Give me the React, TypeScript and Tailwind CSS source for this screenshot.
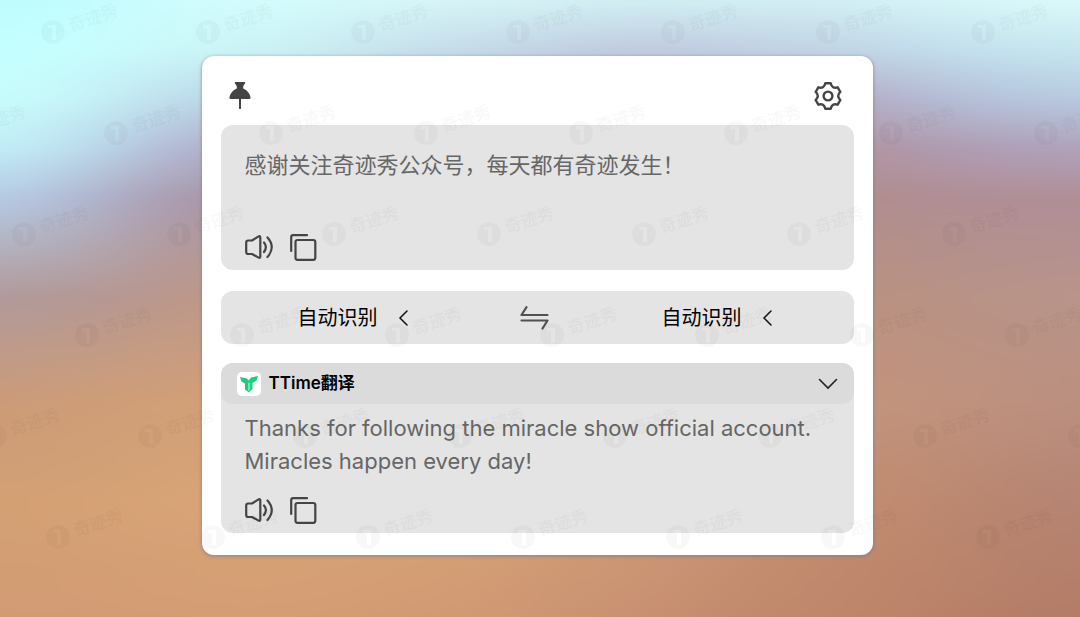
import React, { useState } from 'react';

interface ColorColumn {
  x: number;
  colors: string[];
}

// heights of the colour stops below, in percent of the wallpaper
const stops = [0, 8, 16, 24, 32, 48, 65, 81, 100];

const wallpaper: ColorColumn[] = [
  { x: -90, colors: ['#bcfcff', '#c4ffff', '#c8fdfc', '#c2eef7', '#b6cde6', '#b09a9c', '#cb9b78', '#d3a074', '#d39b74'] },
  { x: 90, colors: ['#cbfdfe', '#cbfcfc', '#c4e8f3', '#b6c8e2', '#aaa0ba', '#b8968e', '#d09f78', '#d6a376', '#d49c74'] },
  { x: 180, colors: ['#d4fcfd', '#cbf2f5', '#b9cfe4', '#aea5c2', '#a8929f', '#c09886', '#d3a077', '#d8a478', '#d59d73'] },
  { x: 360, colors: ['#d6f5f7', '#c6dcea', '#b4b2cc', '#ab98aa', '#b0938f', '#c49a80', '#d3a077', '#d7a377', '#d29a73'] },
  { x: 540, colors: ['#d2eef3', '#bfcbdf', '#b4a6bf', '#b09298', '#b0908c', '#c0947e', '#cd9b78', '#cf9a76', '#c99172'] },
  { x: 720, colors: ['#d2eff4', '#c2d3e4', '#b4a9c2', '#b0929d', '#b08e8c', '#bb9180', '#c3937b', '#c38d70', '#bf876b'] },
  { x: 900, colors: ['#d5f5f8', '#c2e0ee', '#b3c0d9', '#af9cb4', '#b08e96', '#b79285', '#c0937f', '#bc8870', '#b98067'] },
  { x: 1000, colors: ['#dbfafa', '#c6e6f0', '#b8cae0', '#b0a2bc', '#b08e96', '#b8948a', '#bb8f7f', '#b58473', '#b37c67'] },
];

const watermarkRows = [0, 1, 2, 3, 4, 5];
const watermarkCols = [0, 1, 2, 3, 4, 5, 6, 7];

const Wallpaper: React.FC = () => (
  <svg
    className="absolute inset-0 size-full"
    viewBox="0 0 1080 617"
    preserveAspectRatio="none"
    aria-hidden="true"
  >
    <defs>
      <filter id="soften" filterUnits="userSpaceOnUse" x="-300" y="-100" width="1680" height="817" colorInterpolationFilters="sRGB">
        <feGaussianBlur stdDeviation="65 4" />
      </filter>
      {wallpaper.map((column, i) => (
        <linearGradient key={column.x} id={`column-${i}`} x1="0" y1="0" x2="0" y2="617" gradientUnits="userSpaceOnUse">
          {column.colors.map((color, j) => (
            <stop key={j} offset={`${stops[j]}%`} stopColor={color} />
          ))}
        </linearGradient>
      ))}
    </defs>
    <g filter="url(#soften)">
      {wallpaper.map((column, i) => (
        <rect
          key={column.x}
          x={i === 0 ? -300 : column.x}
          y="-30"
          width={1500 - column.x}
          height="680"
          fill={`url(#column-${i})`}
        />
      ))}
    </g>
  </svg>
);

const Watermark: React.FC = () => (
  <svg
    className="pointer-events-none absolute inset-0 size-full"
    viewBox="0 0 1080 617"
    preserveAspectRatio="xMinYMin slice"
    aria-hidden="true"
  >
    {watermarkRows.map((row) =>
      watermarkCols.map((col) => {
        const x = 53 + ((row * 63) % 155) + (col - 1) * 155;
        const y = 32 + row * 101;
        // skip the marks that fall outside the window
        if (x < -60 || x > 1085) return null;
        return (
          <g key={`${row}-${col}`} transform={`translate(${x} ${y})`} fill="#000" opacity="0.022">
            <path
              fillRule="evenodd"
              d="M0-12a12 12 0 1 1 0 24a12 12 0 1 1 0-24ZM-5-4V-7H3V8H-1V-4Z"
            />
            <text
              x="17"
              y="5"
              transform="rotate(-18)"
              className="font-['Noto_Sans_CJK_SC',sans-serif] text-[17px] font-bold"
            >
              奇迹秀
            </text>
          </g>
        );
      })
    )}
  </svg>
);

const PinIcon: React.FC = () => (
  <svg width="22" height="28" viewBox="0 0 22 28" fill="#444" aria-hidden="true">
    <path d="M6.5 0h9c.6 0 .9.7.6 1.200L14.200 4.200v2.300C18 8.200 21.200 11.500 21.500 16c0 .7-.4 1-1 1h-19c-.6 0-1-.3-1-1C.8 11.500 4 8.200 7.800 6.500V4.200L5.900 1.200C5.600.7 5.900 0 6.500 0Z" />
    <path d="M10 16h2v10.500c0 .7-2 .7-2 0Z" />
  </svg>
);

const GearIcon: React.FC = () => (
  <svg width="30" height="30" viewBox="-15 -15 30 30" fill="none" stroke="#444" strokeWidth="2.400" strokeLinejoin="round" aria-hidden="true">
    <path d="M12.360 4.020L9.660 8.690Q4 6.930 2.700 12.710H-2.700Q-4 6.930-9.660 8.690L-12.360 4.020Q-8 0-12.360-4.020L-9.660-8.690Q-4-6.930-2.700-12.710H2.700Q4-6.930 9.660-8.690L12.360-4.020Q8 0 12.360 4.020Z" />
    <circle r="4.400" />
  </svg>
);

const VolumeIcon: React.FC = () => (
  <svg width="29" height="27" viewBox="0 0 29 27" fill="none" stroke="#444" strokeWidth="2.200" strokeLinecap="round" strokeLinejoin="round" aria-hidden="true">
    <path d="M3.200 6.500H7L13.200 2.600Q15.300 1.400 15.300 3.500V22.500Q15.300 24.600 13.200 23.400L7 20H3.200Q1.200 20 1.200 18V8.500Q1.200 6.500 3.200 6.500Z" />
    <path d="M19 8.500Q22.800 13 19 18" />
    <path d="M22.500 3.500Q31 13 22.500 23" />
  </svg>
);

const CopyIcon: React.FC = () => (
  <svg width="27" height="27" viewBox="0 0 27 27" fill="none" stroke="#444" strokeWidth="2.200" strokeLinecap="round" strokeLinejoin="round" aria-hidden="true">
    <rect x="5.500" y="6" width="19.800" height="19.800" rx="2" />
    <path d="M1.200 17V3.200Q1.200 1.200 3.200 1.200H17" />
  </svg>
);

const SwapIcon: React.FC = () => (
  <svg width="29" height="24" viewBox="0 0 29 24" fill="none" stroke="#505050" strokeWidth="2.200" strokeLinecap="round" strokeLinejoin="round" aria-hidden="true">
    <path d="M6.500 1.200L1.500 9H27.500" />
    <path d="M1.500 14.500H27.500L22.500 22.500" />
  </svg>
);

const LogoIcon: React.FC = () => (
  <svg width="24" height="24" viewBox="0 0 24 24" aria-hidden="true">
    <rect width="24" height="24" rx="5" fill="#fff" />
    <path d="M3 5L10 6.500L12 9V20.500L8 17.500V11.500L4.500 9.500Z" fill="#25c77a" />
    <path d="M21 4L14 5.500L11.500 8.500V20.500L15.500 17V11L19.500 8.500Z" fill="#17d577" />
    <path d="M11.500 11L12.500 10.500V18L11.500 19Z" fill="#d8f8e8" />
  </svg>
);

const ActionButtons: React.FC = () => (
  <div className="flex gap-4">
    <button type="button" aria-label="朗读">
      <VolumeIcon />
    </button>
    <button type="button" aria-label="复制">
      <CopyIcon />
    </button>
  </div>
);

interface LanguageSelectProps {
  id: string;
  label: string;
}

const LanguageSelect: React.FC<LanguageSelectProps> = ({ id, label }) => (
  <label htmlFor={id} className="flex items-center gap-5">
    <select id={id} aria-label={label} className="appearance-none bg-transparent text-xl text-black outline-none">
      <option value="auto">自动识别</option>
    </select>
    <svg width="10" height="16" viewBox="0 0 10 16" fill="none" stroke="#111" strokeWidth="1.500" strokeLinecap="round" aria-hidden="true">
      <path d="M9 1L2 8L9 15" />
    </svg>
  </label>
);

const App: React.FC = () => {
  const [text, setText] = useState('感谢关注奇迹秀公众号，每天都有奇迹发生！');
  const [open, setOpen] = useState(true);

  return (
    <div className="relative min-h-screen overflow-hidden bg-[#c4967f] py-14 pr-[22px] pl-4 font-[Inter,'Noto_Sans_CJK_SC',sans-serif]">
      <Wallpaper />
      <main className="relative mx-auto w-full max-w-[671px] rounded-xl bg-white px-[19px] pt-6 pb-[22px] shadow-[0_1px_3px_1px_rgba(130,120,130,0.5)]">
        <header className="flex h-[45px] items-start justify-between pr-[11px] pl-2">
          <button type="button" aria-label="置顶" className="flex h-8 items-center">
            <PinIcon />
          </button>
          <button type="button" aria-label="设置" className="flex h-8 items-center">
            <GearIcon />
          </button>
        </header>

        <section className="rounded-xl bg-[#e4e4e4] px-6 pt-6 pb-[9px]">
          <textarea
            aria-label="原文"
            value={text}
            onChange={(e) => setText(e.target.value)}
            className="block h-[85px] w-full resize-none bg-transparent text-[22px] leading-[33px] text-[#666] outline-none"
          />
          <ActionButtons />
        </section>

        <section className="mt-[21px] flex h-[53px] items-center justify-between rounded-xl bg-[#e4e4e4] pr-[82px] pl-[77px]">
          <LanguageSelect id="source" label="源语言" />
          <button type="button" aria-label="交换语言">
            <SwapIcon />
          </button>
          <LanguageSelect id="target" label="目标语言" />
        </section>

        <section className="mt-[19px] rounded-xl bg-[#e4e4e4]">
          <div className="flex h-[41px] items-center justify-between rounded-xl bg-[#dbdbdb] px-4">
            <h2 className="flex items-center gap-2 text-[17px] font-semibold text-black">
              <LogoIcon />
              TTime翻译
            </h2>
            <button type="button" aria-label="展开或收起" aria-expanded={open} onClick={() => setOpen(!open)}>
              <svg width="20" height="12" viewBox="0 0 20 12" fill="none" stroke="#222" strokeWidth="1.600" strokeLinecap="round" aria-hidden="true">
                <path d="M1.500 1.500L10 10L18.500 1.500" />
              </svg>
            </button>
          </div>
          {open && (
            <div className="px-6 pt-2 pb-[9px]">
              <p className="mb-[19px] text-[22px] leading-[33px] text-[#666]">
                Thanks for following the miracle show official account. Miracles happen every day!
              </p>
              <ActionButtons />
            </div>
          )}
        </section>
      </main>
      <Watermark />
    </div>
  );
};

export default App;
